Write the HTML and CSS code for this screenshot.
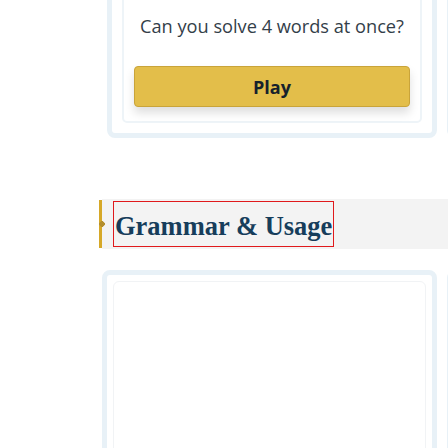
FILE: index.html
```html
<!DOCTYPE html>
<html lang="en">
<head>
<meta charset="utf-8">
<title>Word games</title>
<link rel="stylesheet" href="styles.css">
</head>
<body>
<main class="page">
  <div class="row row-top">
    <section class="card card-top">
      <div class="card-inner">
        <p class="prompt">Can you solve 4 words at once?</p>
        <button class="play">Play</button>
      </div>
    </section>
    <section class="card card-next"></section>
  </div>

  <div class="section-head">
    <h2 class="section-title">Grammar &amp; Usage</h2>
  </div>

  <div class="row row-bottom">
    <section class="card card-low">
      <div class="card-inner card-inner-low"></div>
    </section>
    <section class="card card-next card-next-low"></section>
  </div>
</main>
</body>
</html>
```

FILE: styles.css
```css
html, body {
  margin: 0;
  padding: 0;
  overflow: hidden;
  background: #ffffff;
  width: 448px;
  height: 448px;
}

.page {
  padding-top: 1px;
  padding-left: 100px;
  height: 447px;
  overflow: hidden;
  font-family: "Open Sans", "Liberation Sans", sans-serif;
}

.row {
  display: flex;
  gap: 10px;
  width: 700px;
}

.row-top {
  margin-top: -21px;
  margin-left: 7px;
}

.card {
  box-sizing: border-box;
  border: 5px solid #e8f1f7;
  border-radius: 8px;
  background: #ffffff;
  flex: none;
}

.card-top {
  width: 330px;
  height: 158px;
  padding: 10px;
}

.card-next {
  width: 330px;
  height: 158px;
}

.card-inner {
  box-sizing: border-box;
  height: 100%;
  border: 2px solid #eef4f8;
  border-radius: 5px;
  padding: 15px 10px 15px;
  display: flex;
  flex-direction: column;
  align-items: stretch;
}

.prompt {
  margin: 0 0 26px;
  font-size: 18.2px;
  line-height: 28px;
  color: #333e49;
  text-align: center;
  white-space: nowrap;
}

.play {
  flex: none;
  height: 41px;
  border: 1px solid #c9a43a;
  border-radius: 4px;
  background: #e3be4a;
  color: #16212c;
  font-family: "Open Sans", "Liberation Sans", sans-serif;
  font-weight: 700;
  font-size: 18px;
  box-shadow: 0 6px 10px rgba(0, 0, 0, 0.13);
  padding: 0;
}

.section-head {
  margin-top: 61px;
  margin-left: -1px;
  height: 50px;
  box-sizing: border-box;
  background:
    radial-gradient(circle 3px at 3px 25px, #b38e2e 85%, rgba(179, 142, 46, 0) 100%) no-repeat,
    linear-gradient(#d6a828, #d6a828) 0 1px / 3px 48px no-repeat,
    linear-gradient(#f3f3f3, #f3f3f3) 3px 0 / 100% 100% no-repeat;
  padding: 3px 0 0 15px;
  width: 400px;
}

.section-title {
  display: inline-block;
  margin: 0;
  box-sizing: border-box;
  height: 44px;
  padding: 4px 1px 0 1px;
  line-height: 40px;
  font-family: "Liberation Serif", "DejaVu Serif", serif;
  font-weight: 700;
  font-size: 26.5px;
  color: #163d5b;
  outline: 1px solid #e0191c;
}

.row-bottom {
  margin-top: 21px;
  margin-left: 2px;
}

.card-low {
  width: 335px;
  height: 220px;
  padding: 6px;
}

.card-inner-low {
  border: 1px solid #f1f3f5;
  border-radius: 6px;
}

.card-next-low {
  height: 220px;
}
```
